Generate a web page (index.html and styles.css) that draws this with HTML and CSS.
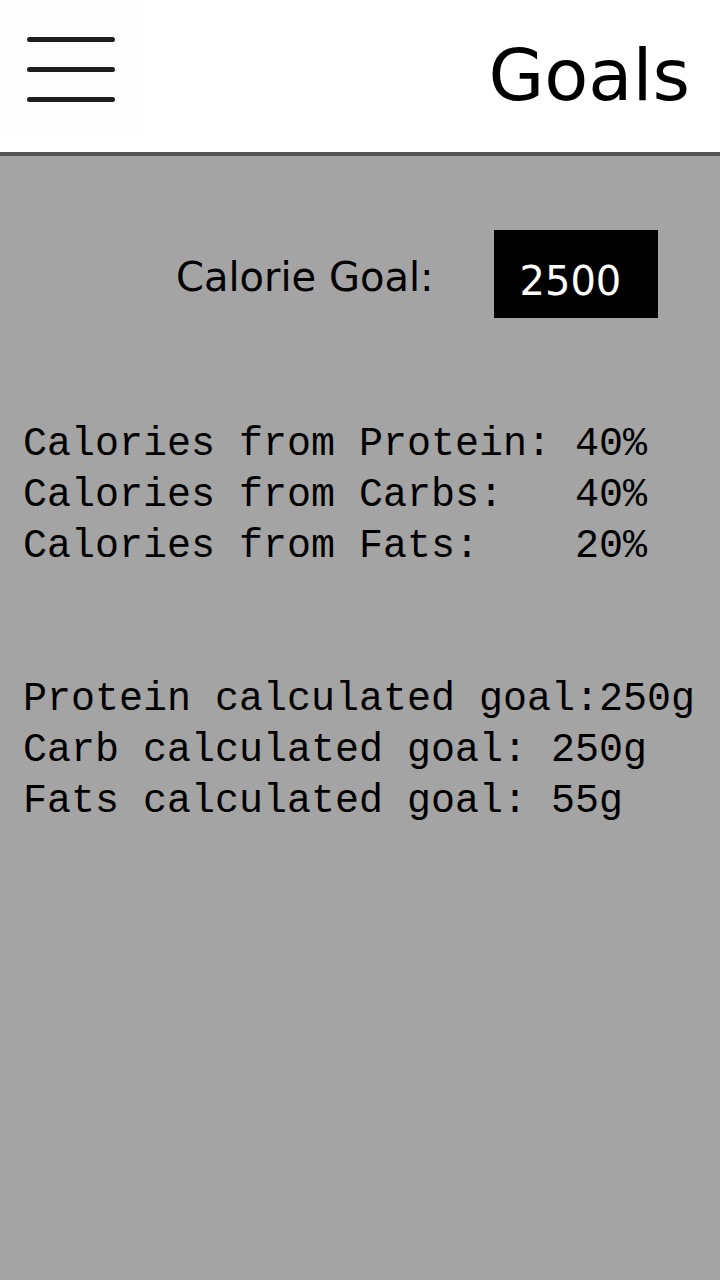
FILE: index.html
```html
<!DOCTYPE html>
<html>
<head>
<meta charset="utf-8">
<link rel="stylesheet" href="styles.css">
</head>
<body>
<header class="topbar">
  <button class="menu-btn" aria-label="Menu">
    <svg width="88" height="70" viewBox="0 0 88 70">
      <g stroke="#1e1e1e" stroke-width="5" stroke-linecap="round">
        <line x1="2.5" y1="2.5" x2="85.5" y2="2.5"/>
        <line x1="2.5" y1="32.5" x2="85.5" y2="32.5"/>
        <line x1="2.5" y1="62.5" x2="85.5" y2="62.5"/>
      </g>
    </svg>
  </button>
  <h1 class="title">Goals</h1>
</header>
<main class="content">
  <div class="calorie-row">
    <span class="calorie-label">Calorie Goal:</span>
    <span class="calorie-box">2500</span>
  </div>
  <pre class="mono group-pct">Calories from Protein: 40%
Calories from Carbs:   40%
Calories from Fats:    20%</pre>
  <pre class="mono group-goal">Protein calculated goal:250g
Carb calculated goal: 250g
Fats calculated goal: 55g</pre>
</main>
</body>
</html>
```

FILE: styles.css
```css
html, body {
  margin: 0;
  padding: 0;
  height: 100%;
}
body {
  background: #a4a4a4;
  font-family: "DejaVu Sans", sans-serif;
  color: #000;
}
.topbar {
  height: 152px;
  background: #fff;
  display: flex;
  align-items: flex-start;
  justify-content: space-between;
  border-bottom: 4px solid #555;
  box-sizing: content-box;
}
.menu-btn {
  width: 142px;
  height: 137px;
  border: none;
  padding: 0;
  margin: 0;
  background: #fdfdfd;
  display: flex;
  align-items: flex-start;
  justify-content: flex-start;
}
.menu-btn svg {
  display: block;
  margin: 37px 0 0 27px;
}
.title {
  margin: 0;
  font-weight: normal;
  font-size: 72px;
  line-height: 1;
  padding: 39px 30px 0 0;
}
.content {
  padding: 74px 0 0 0;
}
.calorie-row {
  display: flex;
  align-items: flex-start;
  padding-left: 176px;
  gap: 61px;
}
.calorie-label {
  font-size: 40px;
  line-height: 1;
  padding-top: 27px;
}
.calorie-box {
  width: 164px;
  height: 88px;
  background: #000;
  color: #fff;
  font-size: 40px;
  box-sizing: border-box;
  padding: 31px 0 0 25px;
  line-height: 1;
}
.mono {
  font-family: "Liberation Mono", monospace;
  font-size: 40px;
  line-height: 51px;
  margin: 0;
  padding-left: 23px;
}
.group-pct {
  margin-top: 101px;
}
.group-goal {
  margin-top: 102px;
}
```
